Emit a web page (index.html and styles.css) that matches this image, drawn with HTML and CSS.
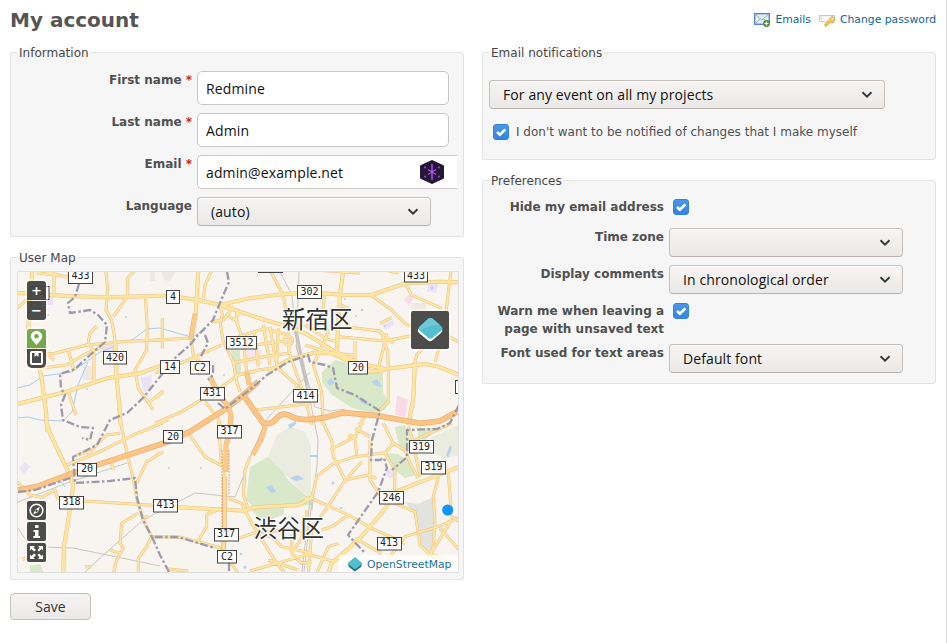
FILE: index.html
```html
<!DOCTYPE html>
<html lang="en">
<head>
<meta charset="utf-8">
<title>My account</title>
<link rel="stylesheet" href="styles.css">
</head>
<body>
<main class="page">
<header class="head">
  <h1>My account</h1>
  <nav class="links">
    <a href="#"><svg width="16" height="14" viewBox="0 0 16 14"><rect x=".7" y=".7" width="14.6" height="10.6" fill="#e6effa" stroke="#5b85c9" stroke-width="1.4"/><path d="M2 2l6 5 6-5M2 10l4-4M14 10l-4-4" fill="none" stroke="#8fb0df"/><circle cx="12.5" cy="10.5" r="3.4" fill="#4c8d37"/><path d="M12.500 8.500v4M10.500 10.500h4" stroke="#fff" stroke-width="1.2"/></svg><span>Emails</span></a>
    <a href="#"><svg width="16" height="14" viewBox="0 0 16 14"><path d="M.6 8.500V2.600h14.800v3" fill="none" stroke="#c9c9c9" stroke-width="1.200"/><path d="M.6 8.500H6M3 4v3" fill="none" stroke="#c9c9c9"/><path d="M11 5.200l2-1.700 2.500 2-.3 3-2 1.200-1.700-.3-4 3.600H6v-2.500l4.400-3.500z" fill="#f8ca55" stroke="#d7962b" stroke-width=".8"/><circle cx="13.300" cy="5.900" r=".8" fill="#fff"/></svg><span>Change password</span></a>
  </nav>
</header>
<div class="columns">
<div class="left">
  <fieldset class="info">
    <legend>Information</legend>
    <div class="row"><label>First name <b>*</b></label><div class="input">Redmine</div></div>
    <div class="row"><label>Last name <b>*</b></label><div class="input">Admin</div></div>
    <div class="row"><label>Email <b>*</b></label><div class="input mail"><span>admin@example.net</span>
      <svg width="24" height="24" viewBox="0 0 24 24"><path d="M12 .5L23.500 5.800V18.200L12 23.500.5 18.200V5.800z" fill="#251638" stroke="#251638" stroke-linejoin="round"/><path d="M12 4v16" stroke="#a34be8" stroke-width="1.600"/><path d="M12 12L8 9.500M12 12l4-2.500M12 12l-4 2.500M12 12l4 2.500" stroke="#b650e8" stroke-width="1.400"/><g fill="#8f55ee"><circle cx="5" cy="7.500" r="1"/><circle cx="19" cy="7.500" r="1"/><circle cx="5" cy="16.500" r="1"/><circle cx="19" cy="16.500" r="1"/></g></svg></div></div>
    <div class="row"><label>Language</label><div class="select lang"><span>(auto)</span><svg class="chev" viewBox="0 0 12 8"><path d="M1.500 1.300L6 5.700l4.500-4.400"/></svg></div></div>
  </fieldset>
  <fieldset class="mapset">
    <legend>User Map</legend>
    <div class="map">
    <svg class="canvas" viewBox="18 272 440 300">
      <defs>
        <g id="roads">
          <g transform="translate(0 245) scale(.3333)"><path d="M110 83L210 96M125 76L205 98M162 85V150M382 155V100L405 76M382 155L340 215M436 152L442 250 440 315 405 375 415 430 460 495M110 330L165 325 260 300 350 292 400 288 490 285M265 290L270 265 290 243M120 370L200 360 260 325 310 305M265 290L282 325V408M205 315L222 378M205 440L228 510M50 190L85 160M450 470L490 438M145 330L162 345M317 76L323 130 318 195 335 225 346 290"/></g>
          <g transform="translate(155 265) scale(.3333)"><path d="M170 16L150 60 145 100M345 16L385 90 400 180 402 260 440 370 470 400M0 225L100 220M22 160V250M0 325L100 285 200 240M170 170L205 165 235 125M218 152L240 165 255 135M195 120L202 150 195 170M195 170L205 230 235 290 245 350 255 380M245 135V170L265 230 275 320M250 215L330 190 400 210M255 245L390 228M230 295L300 280 400 265M245 330L310 315 380 305M298 200L310 305M325 180L345 300M345 185L362 290M370 190L365 300M0 475L80 440 180 380 250 330 300 320M370 310L420 355 440 380M0 400L25 380M150 410L190 460 195 480M108 220L115 270 150 310M300 435L360 428 470 415"/><circle cx="400" cy="227" r="13"/></g>
          <g transform="translate(305 265) scale(.3333)"><path d="M60 80L50 170 70 200M30 15L165 24M240 15L280 24M200 92L260 135 300 175 350 200M300 55L320 90 410 130M120 185L225 198 265 235M100 215L240 228 330 210M150 228V290M245 205L235 250 220 310M228 200L248 260 250 310V410L215 445M0 240L80 265 150 270M330 290L335 270 400 200 470 235M70 200L25 300 50 380 55 480M225 175L260 158M105 120L130 130M0 180L60 220 95 230M162 480L180 455M390 290L415 210 438 16M0 400L20 480"/></g>
          <g transform="translate(0 420) scale(.3333)"><path d="M360 0L375 70 400 180 412 240M200 135L300 95 400 45 490 8M230 105L270 95 320 45 360 40M490 95L440 125 410 190M250 243L400 252 490 258M415 280L365 310 360 370 370 385 350 420 340 460M455 350L440 380 415 415V460M412 240L430 300 455 350 480 350M52 185L90 225 125 232 165 210 175 240M330 390L360 400M255 440H275M425 290H445M68 417L88 415M335 130L340 150"/></g>
          <g transform="translate(155 420) scale(.3333)"><path d="M190 0L200 140M100 40L150 110 205 140M190 268L155 285V320L125 370M155 285L175 270M220 235L260 250 290 310 340 390 365 430 390 460M250 355L300 338 400 330 470 340M350 350L380 380 470 400M285 453L365 430 470 400M410 345V400L440 430 470 425M225 425L250 460M0 350L80 352 200 385M0 110L15 98M0 10L40 0M40 447L100 453M285 110L270 150 265 225 278 262M340 420L430 450M330 345L365 355M455 270V330L420 385"/></g>
          <g transform="translate(305 420) scale(.3333)"><path d="M20 -10L50 0 80 60 85 110 120 180M20 235L35 170 85 130 150 110 240 98M120 180L75 250 20 330M75 90L150 50 175 0M130 45L150 50 155 105M150 25L195 50M120 180L190 165 215 175M130 170L170 125M195 60V180L225 225M0 235H20L130 285 200 325 300 370M240 100L270 150 268 250 330 275 345 375 375 405 440 430M240 100L265 70 300 90 320 140 340 175M265 70L235 10M400 170L385 230 390 300 385 380 375 405M430 160L440 290 470 310M470 290L400 320 300 350 240 430M405 325L465 392M440 300L375 405M20 330L10 460M0 400L90 425M130 285L80 320 50 330M150 355L230 400M310 20L320 50 345 170M320 65L440 10M375 400L470 440M35 460L70 380 100 370"/></g>
        </g>
        <g id="main">
          <g transform="translate(0 245) scale(.3333)"><path d="M97 76L88 190 85 255 110 330 125 400 138 500 142 560M50 145H80L200 153 320 157 490 152M346 290L350 400 358 480 362 540M50 477L100 465 200 440 320 400 420 385 500 355"/></g>
          <g transform="translate(155 265) scale(.3333)"><path d="M0 92L60 95 130 105 195 120 270 145 330 165 400 185 450 205M130 16L122 150M195 120L280 100 380 88 470 82M340 320L400 285 480 262"/></g>
          <g transform="translate(305 265) scale(.3333)"><path d="M0 80L120 90H200L300 55 400 50 470 52M115 16L105 90 95 260M0 205L90 260 160 295 240 312 360 297 400 305 470 333M30 263L80 265 200 320 240 315M330 290L325 400 310 480"/></g>
          <g transform="translate(0 420) scale(.3333)"><path d="M138 0L150 40 200 145 220 195 205 300 192 380 190 460"/></g>
          <g transform="translate(155 420) scale(.3333)"><path d="M0 255L70 262 270 272 300 262 430 255 470 232"/></g>
          <g transform="translate(305 420) scale(.3333)"><path d="M470 138L400 165 280 212 225 285 165 355 80 430 70 460"/></g>
        </g>
        <g id="trunk">
          <g transform="translate(10 245) scale(.3333)"><path d="M556 205L542 285M600 395L622 440 655 485 663 510 660 560 648 600V680M710 380L718 420M765 545L755 580 728 630"/></g>
        </g>
        <g id="motor"><g transform="translate(10 245) scale(.3333)"><path d="M10 738L80 725 200 680 330 638 470 592 540 560 650 490 700 450 745 410M700 450L760 535Q785 540 800 520T840 512Q870 532 940 518L1000 503 1100 512 1230 535 1290 528 1360 490"/></g></g>
      </defs>
      <rect x="18" y="272" width="440" height="300" fill="#f8f4f0"/>
      <g fill="#d8e8c8">
        <path d="M322 372L335 360 355 365 383 373V392L388 402 385 410 372 413 352 408 332 395 322 382z"/>
        <path d="M250 467L268 457 278 463 288 480 311 500V505L255 508 246 500zM250 508H284V514L272 519 258 517zM395 427L405 425 410 440 408 455 400 450zM387 453L398 454 412 463 415 475 405 478 395 470zM418 428H440L425 440 418 438zM231 350H240L241 372 235 375z"/>
        <path d="M30 566L40 564 44 573H30z"/>
      </g>
      <path d="M268 457L277 435 290 427 305 432 311 445 311 498 300 490 288 477zM432 437L459 425V455L445 458 425 450z" fill="#e9ecdf"/>
      <path d="M405 502L418 504 433 497 435 520 433 553 419 547 416 517z" fill="#e1e4de"/>
      <g fill="#fbd9e9"><path d="M397 395L408 400 405 417 395 415zM408 295L414 297 409 305 404 300z"/><path d="M246 350h16v14h-16z" opacity=".5"/></g>
      <g fill="#ece2f7"><path d="M140 378L152 375 151 388 144 393zM25 462L30 467 24 474 19 468zM382 325L393 320 394 325 385 330zM428 284L438 284 436 293 427 291zM385 470L393 468 395 478 388 478zM43 293h10v12H43zM103 345h12v8h-12z"/></g>
      <g fill="#efe9e3"><path d="M83 366h10v14H83zM162 272h13l-5 10-7-3zM150 272h5v9h-5zM411 303h15v8h-15z"/></g>
      <g fill="#b5d3f2"><path d="M327 382l4-4 4 5-6 3zM371 382l6-3 5 8-5-1zM355 395l10 5 6 7-9-4zM266 487l6-2 4 7-5 1zM290 478l8-3 6 4-8 2zM288 425l8-4v3l-6 5zM446 455l4-10 2 3-4 10zM310 455h7v2h-7z"/><circle cx="126" cy="317" r="1"/><circle cx="87" cy="389" r="1"/><circle cx="48" cy="315" r="1"/><circle cx="118" cy="409" r="1"/><circle cx="169" cy="468" r="1"/><circle cx="201" cy="468" r="1"/><circle cx="362" cy="310" r="1.300"/><circle cx="356" cy="316" r="1"/><circle cx="345" cy="299" r="1"/><circle cx="385" cy="326" r="1"/><circle cx="241" cy="554" r="1.300"/><circle cx="245" cy="567" r="1.500"/><circle cx="341" cy="508" r="1.300"/><circle cx="333" cy="483" r="1.500"/><circle cx="432" cy="288" r="1.500"/><circle cx="224" cy="375" r="1"/></g>
      <g class="river"><path d="M17 388L30 385 43 376 72 372 100 352 113 347M17 418L28 417 40 420 63 421 72 412 78 385 88 362M107 343L132 340 147 329 160 328 180 334 192 337 205 330M61 481L65 487"/></g>
      <g class="rail"><path d="M280 272L292 295 297 348 310 400 318 440 317 465 312 510M299 272L297 330 303 370 309 400M296 345L310 402M294 330L313 400M18 502L67 483 127 463M85 572L100 558 143 520 195 493 235 497 242 480 249 460 262 430M43 547L73 548 117 557 160 566M18 528L27 542M310 372L265 421M305 375L315 407 330 411 345 409M310 500L302 572M312 500L304 572"/><path class="thick" d="M296 330L307 385"/></g>
      <use href="#roads" class="road-case"/><use href="#main" class="main-case"/>
      <use href="#roads" class="road"/><use href="#main" class="main-road"/>
      <g transform="translate(155 420) scale(.3333)" class="spur"><path d="M208 170V330L205 400" stroke="#e8ad79" stroke-width="14"/><path d="M208 140V330L205 400" stroke="#fddc93" stroke-width="10"/></g>
      <use href="#trunk" class="trunk-case"/><use href="#motor" class="motor-case"/>
      <use href="#trunk" class="trunk"/><use href="#motor" class="motor"/>
      <path d="M222 450V530M229 450V495" class="dots"/>
      <g class="border">
        <path d="M79 284L75 297 68 303 70 313 90 310 98 315 107 325 105 342 90 355 75 369 60 374 61 388 65 395 61 405 63 420 80 427 93 428 90 440 82 438M227 272L229 282 222 298 213 320 198 335 190 345 175 358 155 383 143 398 127 413 110 420 97 445 87 450 73 457 75 483 110 481 135 478 137 498 143 520 152 537 178 537 198 543 215 548M18 492L35 490 73 477M205 335L208 343 200 358M213 365V375L208 380M218 403L225 409 252 388 267 375 288 362 308 355 310 362 325 365 333 368 337 388 355 395 380 411 372 440 371 460H380L384 458 387 468 378 492 348 535 365 553M459 405L450 423 437 429 407 430V457L392 470M152 537L160 555 169 572M229 563V572"/>
      </g>
      <g class="badges">
        <g><rect x="31" y="286.500" width="18" height="13"/><text x="43" y="297">4</text></g>
        <g><rect x="68.500" y="268.500" width="24" height="15"/><text x="80.500" y="279">433</text></g>
        <g><rect x="404.500" y="268.500" width="23" height="13.500"/><text x="416" y="279">433</text></g>
        <g><rect x="258.500" y="260" width="24" height="12.500"/></g><g><rect x="455.500" y="380.500" width="12" height="13"/></g>
        <g><rect x="297.500" y="285.500" width="24" height="13"/><text x="309.500" y="294.500">302</text></g>
        <g><rect x="166.500" y="290.500" width="13" height="13"/><text x="173" y="300">4</text></g>
        <g><rect x="103.500" y="351.500" width="23" height="12.500"/><text x="115" y="360.500">420</text></g>
        <g><rect x="226.500" y="336.500" width="30" height="12.500"/><text x="241.500" y="345.500">3512</text></g>
        <g><rect x="160.500" y="360.500" width="19" height="13"/><text x="170" y="370">14</text></g>
        <g><rect x="190.500" y="361.500" width="19" height="12.500"/><text x="200" y="370.500">C2</text></g>
        <g><rect x="348.500" y="361.500" width="19" height="12.500"/><text x="358" y="370.500">20</text></g>
        <g><rect x="200.500" y="387.500" width="24" height="12.500"/><text x="212" y="396">431</text></g>
        <g><rect x="293.500" y="389.500" width="24" height="12.500"/><text x="305.500" y="398.500">414</text></g>
        <g><rect x="217.500" y="425.500" width="24" height="12.500"/><text x="229.500" y="434">317</text></g>
        <g><rect x="163.500" y="430.500" width="19" height="12.500"/><text x="173" y="439.500">20</text></g>
        <g><rect x="77.500" y="463.500" width="19" height="12.500"/><text x="87" y="472">20</text></g>
        <g><rect x="59.500" y="496.500" width="24" height="12.500"/><text x="71.500" y="505">318</text></g>
        <g><rect x="153.500" y="499.500" width="24" height="12.500"/><text x="165.500" y="508">413</text></g>
        <g><rect x="214.500" y="528.500" width="24" height="12.500"/><text x="226" y="537">317</text></g>
        <g><rect x="217.500" y="550.500" width="19" height="12.500"/><text x="227" y="559.500">C2</text></g>
        <g><rect x="409.500" y="440.500" width="24" height="12.500"/><text x="421" y="449.500">319</text></g>
        <g><rect x="421.500" y="461.500" width="24" height="12.500"/><text x="433.500" y="470">319</text></g>
        <g><rect x="379.500" y="491.500" width="24" height="12.500"/><text x="391.500" y="500.500">246</text></g>
        <g><rect x="377.500" y="537.500" width="24" height="12.500"/><text x="389" y="546">413</text></g>
      </g>
      <g class="places"><text x="282" y="327.500">新宿区</text><text x="253.500" y="537">渋谷区</text></g>
      <circle cx="447.700" cy="510" r="5.500" fill="#0a96ff"/>
    </svg>
    <div class="controls zoomers"><b class="top">+</b><b class="bot">−</b></div>
    <div class="controls tools"><b class="top green"><svg viewBox="0 0 19 19"><path d="M9.500 16S3.700 10.500 3.700 7.300a5.800 5.500 0 0 1 11.600 0C15.300 10.500 9.500 16 9.500 16z" fill="#fff"/><circle cx="9.500" cy="7.300" r="2.300" fill="#72a94b"/></svg></b><b class="bot"><svg viewBox="0 0 19 19"><rect x="3" y="2" width="13" height="14" rx="2" fill="#fff"/><rect x="5" y="4" width="9" height="10" fill="#4c4c4a"/><path d="M7.500 3h4v5l-2-1.700-2 1.700z" fill="#fff"/></svg></b></div>
    <div class="controls infos">
      <b><svg viewBox="0 0 19 19"><circle cx="9.500" cy="9.500" r="6.300" fill="none" stroke="#fff" stroke-width="1.600"/><path d="M13 5.500l-2 5.500-5 2.500 2.500-5z" fill="#fff"/><circle cx="9.500" cy="9.700" r="1.200" fill="#444"/></svg></b>
      <b><svg viewBox="0 0 19 19"><path d="M8 3h3.500v3H8zM6.500 8H11.500v6H13v2H6.300v-2H8v-4H6.500z" fill="#fff"/></svg></b>
      <b><svg viewBox="0 0 19 19"><path d="M3 3h5L6.500 4.500 9 7 7 8.500 4.500 6 3 7.500zM16 3h-5l1.500 1.500L10.500 7 12 8.500 14.500 6 16 7.500zM3 16h5l-1.500-1.500L9 12l-2-1.500L4.500 13 3 11.500zM16 16h-5l1.500-1.500L10.500 12l1.500-1.500 2.500 2.500 1.500-1.500z" fill="#fff"/></svg></b>
    </div>
    <div class="layer"><svg viewBox="0 0 38 38"><path d="M7 18q-1 2 1 4l9 7.500q2 1.500 4 0l9-7.500q2-2 1-4z" fill="#fff"/><path d="M17.500 7.500q2-1 4 0l9 8q2 2 0 4l-9 7.500q-2 1.500-4 0l-9-7.500q-2-2 0-4z" fill="#54bfce"/><path d="M7.500 17l10-9.500q2-1 4 0l7.500 6.500q-11 0-20 5.500z" fill="#6fcad5"/></svg></div>
    <div class="credit"><svg viewBox="0 0 16 16"><path d="M1 8l1 3 6 4.500 6-4.500 1-3z" fill="#276d78"/><path d="M8 1l6.500 5.500q1 1 0 2L8 13.500 1.500 8.500q-1-1 0-2z" fill="#4ebfcb"/></svg><span>OpenStreetMap</span></div>
    </div>
  </fieldset>
  <button class="save" type="button">Save</button>
</div>
<div class="right">
  <fieldset class="notify">
    <legend>Email notifications</legend>
    <div class="select any"><span>For any event on all my projects</span><svg class="chev" viewBox="0 0 12 8"><path d="M1.500 1.300L6 5.700l4.500-4.400"/></svg></div>
    <div class="self"><i class="check"><svg viewBox="0 0 16 16"><path d="M3.500 8l3.200 3 6.300-6"/></svg></i><span>I don't want to be notified of changes that I make myself</span></div>
  </fieldset>
  <fieldset class="prefs">
    <legend>Preferences</legend>
    <div class="row r1"><label>Hide my email address</label><i class="check"><svg viewBox="0 0 16 16"><path d="M3.500 8l3.200 3 6.300-6"/></svg></i></div>
    <div class="row r2"><label>Time zone</label><div class="select"><span></span><svg class="chev" viewBox="0 0 12 8"><path d="M1.500 1.300L6 5.700l4.500-4.400"/></svg></div></div>
    <div class="row r3"><label>Display comments</label><div class="select"><span>In chronological order</span><svg class="chev" viewBox="0 0 12 8"><path d="M1.500 1.300L6 5.700l4.500-4.400"/></svg></div></div>
    <div class="row r4"><label>Warn me when leaving a page with unsaved text</label><i class="check"><svg viewBox="0 0 16 16"><path d="M3.500 8l3.200 3 6.300-6"/></svg></i></div>
    <div class="row r5"><label>Font used for text areas</label><div class="select"><span>Default font</span><svg class="chev" viewBox="0 0 12 8"><path d="M1.500 1.300L6 5.700l4.500-4.400"/></svg></div></div>
  </fieldset>
</div>
</div>
</main>
</body>
</html>
```
FILE: styles.css
```css
*{box-sizing:border-box}
body{margin:0;background:#fff;font:12px/18px "DejaVu Sans",sans-serif;color:#505050;overflow:hidden}
.page{width:947px;height:643px;border-right:1px solid #ddd;padding:0 10px}
.head{height:45px;display:flex;justify-content:space-between}
h1{margin:8px 0 0;font-size:20px;line-height:24px;color:#555}
.links{display:flex;gap:8px;padding-top:12px;font-size:10.800px;line-height:15px}
.links a{display:flex;gap:5px;color:#169;text-decoration:none}
.links svg{margin-top:1px}
.columns{display:flex;gap:18px}
.left,.right{width:454px}
fieldset{margin:0 0 13px;padding:0 6px;border:1px solid #e2e2e2;border-radius:3px;background:#f6f6f6;min-width:0}
legend{padding:0 2px;line-height:17px;height:15px;color:#484848;letter-spacing:.02px}
.info{height:192px;padding-top:11px}
.row{display:flex;gap:5px;margin-bottom:8px}
label{width:175px;text-align:right;font-weight:bold}
label b{color:#c22}
.input{width:252px;height:34px;background:#fff;border:1px solid #c9c5c0;border-radius:5px;padding:0 8px;line-height:33px;color:#111;font-family:"Open Sans",sans-serif;font-size:14px;letter-spacing:.13px}
.mail{width:260px;border-right:0;border-radius:5px 0 0 5px;display:flex;justify-content:space-between;padding-right:13px}
.mail svg{margin-top:4px}
.select{width:234px;height:29px;border:1px solid #c5c0bc;border-bottom-color:#b9b3ae;border-radius:4px;background:linear-gradient(#f6f5f4,#ebe9e7);box-shadow:inset 0 1px #fff;display:flex;justify-content:space-between;align-items:center;padding:0 11px 0 13px;color:#111;font:14px/27px "Open Sans",sans-serif;letter-spacing:.1px}
.chev{width:12px;height:8px;fill:none;stroke:#333a3c;stroke-width:2}
.mapset{height:330px;padding-top:6px}
.map{position:relative;width:442px;height:302px;border:1px solid #e0e0e0;overflow:hidden}
.canvas{display:block;width:440px;height:300px}
.canvas use,.spur{fill:none;stroke-linejoin:round;stroke-linecap:butt}
.road-case{stroke:#ebbd8a;stroke-width:9px}
.road{stroke:#fee6a0;stroke-width:6px}
.main-case{stroke:#ebbd8a;stroke-width:12px}
.main-road{stroke:#fee79c;stroke-width:9px}
.trunk-case{stroke:#eab27c;stroke-width:15px}
.trunk{stroke:#fdca86;stroke-width:12px}
.motor-case{stroke:#e6ad78;stroke-width:17px}
.motor{stroke:#fdc581;stroke-width:13px}
.river{fill:none;stroke:#a5cff3;stroke-width:1}
.rail{fill:none;stroke:#bdbbb8;stroke-width:.8}
.rail .thick{stroke-width:3;opacity:.7}
.border{fill:none;stroke:#9d9aad;stroke-width:2.300;stroke-dasharray:8 2.500 2.500 2.500;stroke-linejoin:round}
.dots{fill:none;stroke:#dd8466;stroke-width:.7;stroke-dasharray:2 1}
.badges{fill:#fff;stroke:#444;stroke-width:1}
.badges text{font:10px "DejaVu Sans Mono",monospace;fill:#222;stroke:none;text-anchor:middle}
.places{font:23.500px "Noto Sans CJK JP",sans-serif;fill:#333;stroke:#fff;stroke-width:2;paint-order:stroke}
.controls{position:absolute;left:9px;width:19px;border-radius:3px;box-shadow:0 0 0 2px #ffffff80;display:flex;flex-direction:column;gap:1px}
.controls b{height:19px;background:#41413ff0;color:#fff;text-align:center;font:bold 13px/19px "DejaVu Sans",sans-serif}
.controls svg{display:block;width:19px;height:19px}
.controls .top{border-radius:3px 3px 0 0}
.controls .bot{border-radius:0 0 3px 3px}
.controls .green{background:#72a94b}
.zoomers{top:9px}
.tools{top:57px}
.tools .bot{border-radius:0 0 5px 5px}
.infos{top:229px;gap:2px}
.infos b{border-radius:2px}
.layer{position:absolute;left:393px;top:39px;width:38px;height:38px;background:#4c4c4a;border-radius:2px;box-shadow:0 0 0 2px #ffffff70}
.credit{position:absolute;right:0;bottom:0;width:119px;height:17px;background:#ffffffcc;display:flex;gap:4px;padding:1px 7px 0 8px;color:#2472a4;font-size:10.800px;line-height:18px}
.credit svg{width:16px;height:16px;flex:none}
.save{display:block;width:81px;height:27px;border:1px solid #c5c0bc;border-radius:4px;background:linear-gradient(#f6f5f4,#ebe9e7);color:#333;font:14px/24px "Open Sans",sans-serif;padding:0}
.notify{height:115px;padding-top:20px}
.any{width:396px}
.self{display:flex;gap:7px;padding:14px 0 0 4px;line-height:18px}
.check{width:16px;height:16px;border-radius:3px;background:linear-gradient(#4b96e8,#3584e4);display:block;flex:none;border:1px solid #3580da}
.check svg{display:block;width:14px;height:14px;fill:none;stroke:#fff;stroke-width:3}
.self .check{margin-top:1px}
.prefs{height:211px;padding-top:10px}
.prefs .row{margin:0}
.prefs .check{margin:1px 0 0 4px}
.r1{height:30px}
.r2,.r3{height:37px}
.r4{height:42px}
```
